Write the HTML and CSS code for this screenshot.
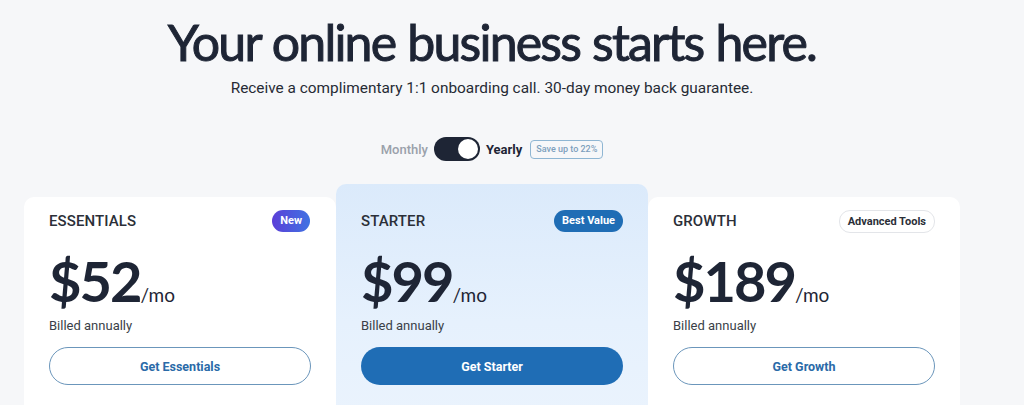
FILE: index.html
```html
<!DOCTYPE html>
<html>
<head>
<meta charset="utf-8">
<link rel="stylesheet" href="styles.css">
</head>
<body>
<div class="page">
  <h1 class="title">Your online business starts here.</h1>
  <p class="subtitle">Receive a complimentary 1:1 onboarding call. 30-day money back guarantee.</p>
  <div class="billing">
    <span class="opt off">Monthly</span>
    <span class="switch"><span class="knob"></span></span>
    <span class="opt on">Yearly</span>
    <span class="save">Save up to 22%</span>
  </div>
  <div class="plans">
    <div class="card">
      <div class="card-head"><span class="plan">ESSENTIALS</span><span class="badge badge-new">New</span></div>
      <div class="price"><span class="amount">$52</span><span class="per">/mo</span></div>
      <div class="billed">Billed annually</div>
      <a class="btn btn-outline">Get Essentials</a>
    </div>
    <div class="card card-featured">
      <div class="card-head"><span class="plan">STARTER</span><span class="badge badge-best">Best Value</span></div>
      <div class="price"><span class="amount">$99</span><span class="per">/mo</span></div>
      <div class="billed">Billed annually</div>
      <a class="btn btn-solid">Get Starter</a>
    </div>
    <div class="card">
      <div class="card-head"><span class="plan">GROWTH</span><span class="badge badge-adv">Advanced Tools</span></div>
      <div class="price"><span class="amount">$189</span><span class="per">/mo</span></div>
      <div class="billed">Billed annually</div>
      <a class="btn btn-outline">Get Growth</a>
    </div>
  </div>
</div>
</body>
</html>
```
FILE: styles.css
```css
* { box-sizing: border-box; }
html, body { margin: 0; padding: 0; }
body {
  background: #f6f7f9;
  font-family: Roboto, "Liberation Sans", sans-serif;
  color: #1e2535;
  height: 405px;
  overflow: hidden;
}
.page {
  width: 936px;
  margin-left: 24px;
  display: flex;
  flex-direction: column;
  align-items: center;
}
.title {
  margin: 14px 0 0;
  font-family: Lato, "Open Sans", sans-serif;
  font-weight: 400;
  font-size: 50px;
  line-height: 56px;
  color: #1e2535;
  letter-spacing: -1.8px;
  word-spacing: 1px;
  -webkit-text-stroke: 1px #1e2535;
}
.subtitle {
  margin: 8px 0 0;
  font-size: 15.4px;
  line-height: 20px;
  color: #262b35;
}
.billing {
  margin-top: 39px;
  display: flex;
  align-items: center;
  height: 24px;
}
.opt { font-size: 13px; }
.opt.off { color: #9aa1ab; font-weight: 500; }
.opt.on { color: #1e2535; font-weight: 700; }
.switch {
  width: 46px;
  height: 24px;
  border-radius: 12px;
  background: #1e2535;
  margin: 0 6px;
  display: flex;
  align-items: center;
  justify-content: flex-end;
  padding: 2px;
}
.knob {
  width: 20px;
  height: 20px;
  border-radius: 50%;
  background: #fff;
}
.save {
  margin-left: 8px;
  font-size: 9px;
  font-weight: 500;
  color: #7d9fbd;
  border: 1px solid #8fb6d3;
  border-radius: 4px;
  padding: 3px 5px;
  line-height: 11px;
}
.plans {
  align-self: stretch;
  margin-top: 23px;
  display: grid;
  grid-template-columns: 312px 312px 312px;
  align-items: start;
}
.card {
  background: #fff;
  border-radius: 10px;
  padding: 13px 25px 30px;
  margin-top: 13px;
  height: 230px;
}
.card-featured {
  margin-top: 0;
  padding-top: 26px;
  background: linear-gradient(180deg, #dbeafb 0%, #e6f1fd 60%, #eaf3fd 100%);
}
.card-head {
  display: flex;
  justify-content: space-between;
  align-items: center;
  height: 22px;
}
.plan { font-size: 15px; font-weight: 500; color: #2b2f38; letter-spacing: 0.1px; }
.badge {
  font-size: 11px;
  font-weight: 700;
  border-radius: 11px;
  height: 22px;
  line-height: 22px;
  padding: 0 8px;
}
.badge-new { background: linear-gradient(90deg, #5b3fd8, #3f72e2); color: #fff; margin-right: 1px; }
.badge-best { background: #1f6db5; color: #fff; }
.badge-adv { background: #fff; color: #2b2f38; border: 1px solid #e3e5e9; height: 23px; line-height: 21px; padding: 0 8px; }
.price {
  margin-top: 17px;
  display: flex;
  align-items: baseline;
  height: 64px;
}
.amount {
  font-family: Lato, "Open Sans", sans-serif;
  font-weight: 700;
  font-size: 56px;
  line-height: 64px;
  color: #1e2535;
  letter-spacing: -2px;
}
.per { font-family: Lato, sans-serif; font-size: 19px; margin-left: 0; color: #1e2535; }
.billed { margin-top: 5px; font-size: 13px; color: #3a3f48; line-height: 16px; }
.btn {
  display: flex;
  align-items: center;
  justify-content: center;
  margin-top: 13px;
  height: 38px;
  border-radius: 19px;
  font-size: 12.5px;
  font-weight: 700;
}
.btn-outline { border: 1px solid #6b96bb; color: #2a6aa8; background: #fff; }
.btn-solid { background: #1f6db5; color: #fff; }
```
